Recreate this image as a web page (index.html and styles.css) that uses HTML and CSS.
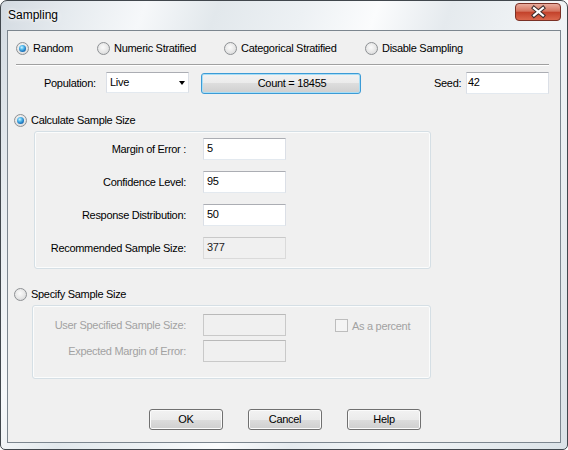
FILE: index.html
```html
<!DOCTYPE html>
<html>
<head>
<meta charset="utf-8">
<title>Sampling</title>
<link rel="stylesheet" href="styles.css">
</head>
<body>
<div class="window">
  <div class="titlebar">
    <span class="title">Sampling</span>
    <div class="close" aria-label="Close">
      <svg width="46" height="18" viewBox="0 0 46 18">
        <defs>
          <linearGradient id="cg" x1="0" y1="0" x2="0" y2="1">
            <stop offset="0" stop-color="#eab0a2"/>
            <stop offset="0.45" stop-color="#d5745f"/>
            <stop offset="0.52" stop-color="#c3422b"/>
            <stop offset="1" stop-color="#dc6a4f"/>
          </linearGradient>
        </defs>
        <rect x="0.5" y="0.5" width="45" height="17" rx="3.5" fill="url(#cg)" stroke="#7a3126"/>
        <path d="M19 5 L28 12.5 M28 5 L19 12.5" stroke="#3b2b2b" stroke-width="4.2" stroke-linecap="square"/>
        <path d="M19 5 L28 12.5 M28 5 L19 12.5" stroke="#ffffff" stroke-width="2.2" stroke-linecap="square"/>
      </svg>
    </div>
  </div>
  <div class="client">
    <div class="modes">
      <span class="radio checked"><span class="dot"></span>Random</span>
      <span class="radio"><span class="dot"></span>Numeric Stratified</span>
      <span class="radio"><span class="dot"></span>Categorical Stratified</span>
      <span class="radio"><span class="dot"></span>Disable Sampling</span>
    </div>
    <div class="sep"></div>
    <div class="poprow">
      <span class="poplabel">Population:</span>
      <div class="combo"><span>Live</span><span class="arrow"></span></div>
      <div class="btn default count">Count = 18455</div>
      <span class="seedlabel">Seed:</span>
      <div class="field seed">42</div>
    </div>

    <div class="radio checked section calc-radio"><span class="dot"></span>Calculate Sample Size</div>
    <div class="group calc">
      <span class="lbl">Margin of Error :</span><div class="field">5</div>
      <span class="lbl">Confidence Level:</span><div class="field">95</div>
      <span class="lbl">Response Distribution:</span><div class="field">50</div>
      <span class="lbl">Recommended Sample Size:</span><div class="field readonly">377</div>
    </div>

    <div class="radio section spec-radio"><span class="dot"></span>Specify Sample Size</div>
    <div class="group spec">
      <span class="lbl disabled">User Specified Sample Size:</span><div class="field off"></div>
      <span class="check disabled"><span class="box"></span>As a percent</span>
      <span class="lbl disabled">Expected Margin of Error:</span><div class="field off"></div>
    </div>

    <div class="actions">
      <div class="btn">OK</div>
      <div class="btn">Cancel</div>
      <div class="btn">Help</div>
    </div>
  </div>
</div>
</body>
</html>
```

FILE: styles.css
```css
* { box-sizing: border-box; }

html, body {
  margin: 0;
  padding: 0;
}

body {
  width: 568px;
  height: 450px;
  overflow: hidden;
  background: #ffffff;
  font-family: "Liberation Sans", Arial, sans-serif;
  font-size: 11px;
  letter-spacing: -0.3px;
  color: #000;
}

.window {
  width: 568px;
  height: 450px;
  border: 1px solid #41474d;
  border-radius: 7px 7px 5px 5px;
  padding: 0 6px 6px 6px;
  display: flex;
  flex-direction: column;
  background: linear-gradient(110deg, #d3dae1 0%, #e6ebef 10%, #f6f8fa 20%, #e2e8ec 30%, #edf1f4 42%, #fbfcfd 52%, #e5eaee 62%, #f2f5f7 76%, #dbe2e7 100%);
}

.titlebar {
  height: 29px;
  flex: none;
  display: flex;
  justify-content: space-between;
  align-items: flex-start;
}

.title {
  font-size: 12px;
  letter-spacing: 0;
  line-height: 14px;
  padding-top: 7px;
  margin-left: 1px;
  color: #000;
  text-shadow: 0 0 6px #ffffff, 0 0 3px #ffffff;
}

.close {
  width: 46px;
  height: 18px;
  margin-top: 2px;
  display: flex;
}

.client {
  flex: 1;
  border: 1px solid #7c868f;
  background: #f0f0f0;
  padding: 0 11px 0 8px;
  display: flex;
  flex-direction: column;
  align-items: flex-start;
}

/* radios */
.modes {
  display: grid;
  grid-template-columns: 81px 127px 141px auto;
  height: 17px;
  margin-top: 9px;
  align-items: center;
  width: 100%;
}

.radio {
  display: flex;
  align-items: center;
  gap: 4px;
  white-space: nowrap;
  line-height: 13px;
}

.dot {
  flex: none;
  width: 13px;
  height: 13px;
  border-radius: 50%;
  border: 1px solid #8e9194;
  background: radial-gradient(circle at 45% 40%, #fbfbfb 0%, #e6e6e6 55%, #cdd0d2 100%);
  position: relative;
}

.checked .dot::after {
  content: "";
  position: absolute;
  left: 2px;
  top: 2px;
  width: 7px;
  height: 7px;
  border-radius: 50%;
  background: radial-gradient(circle at 40% 35%, #d4f3ff 0%, #5cc0ef 30%, #1f78c0 65%, #0d4a86 100%);
}

.sep {
  width: 100%;
  margin-top: 7px;
  border-top: 1px solid #a0a0a0;
  border-bottom: 1px solid #ffffff;
}

/* population row */
.poprow {
  display: flex;
  align-items: flex-start;
  height: 22px;
  margin-top: 6px;
}

.poplabel {
  width: 62px;
  margin-left: 28px;
  line-height: 22px;
}

.combo {
  width: 83px;
  height: 21px;
  background: #fff;
  border: 1px solid #dbdfe6;
  border-top-color: #abadb3;
  border-bottom-color: #e3e9ef;
  display: flex;
  align-items: center;
  justify-content: space-between;
  padding: 0 3px 2px 3px;
}

.arrow {
  width: 0;
  height: 0;
  border-left: 3.5px solid transparent;
  border-right: 3.5px solid transparent;
  border-top: 4px solid #000;
  margin-top: 2px;
}

.btn {
  width: 74px;
  height: 21px;
  border: 1px solid #707070;
  border-radius: 3px;
  background: linear-gradient(#f2f2f2 0%, #ebebeb 50%, #dddddd 50%, #cfcfcf 100%);
  box-shadow: inset 0 0 0 1px #fbfbfb;
  display: flex;
  align-items: center;
  justify-content: center;
  padding-bottom: 1px;
}

.btn.default {
  border-color: #3c9bd6;
  box-shadow: inset 0 0 0 1px #a8def6;
}

.count {
  width: 160px;
  margin-left: 12px;
  margin-top: 1px;
  padding-left: 22px;
}

.seedlabel {
  width: 32px;
  margin-left: 73px;
  line-height: 22px;
}

.field {
  width: 83px;
  height: 22px;
  background: #fff;
  border: 1px solid #dbdfe6;
  border-top-color: #abadb3;
  border-bottom-color: #e3e9ef;
  display: flex;
  align-items: center;
  padding: 0 3px 2px 3px;
}

.seed {
  padding: 0 2px 3px 1px;
}

.field.readonly {
  background: #f0f0f0;
  border-color: #dadada;
  border-top-color: #c9c9c9;
  color: #222;
}

.field.off {
  background: #f0f0f0;
  border-color: #c9c9c9;
  border-top-color: #b9b9b9;
}

/* sections */
.section {
  height: 17px;
}

.calc-radio {
  margin-top: 18px;
  margin-left: -2px;
}

.spec-radio {
  margin-top: 17px;
  margin-left: -2px;
}

.group {
  border: 1px solid #d5dfe5;
  border-radius: 3px;
  box-shadow: inset 0 0 0 1px #fbfcfc;
  display: grid;
  align-items: center;
  grid-auto-rows: 22px;
}

.calc {
  margin-top: 2px;
  margin-left: 18px;
  width: 397px;
  padding: 6px 0 9px 0;
  grid-template-columns: 151px 83px;
  column-gap: 17px;
  row-gap: 11px;
}

.spec {
  margin-top: 2px;
  margin-left: 16px;
  width: 399px;
  padding: 8px 0 16px 0;
  grid-template-columns: 153px 83px auto;
  column-gap: 17px;
  row-gap: 4px;
}

.lbl {
  text-align: right;
  white-space: nowrap;
  padding-bottom: 1px;
}

.disabled {
  color: #a2a2a2;
}

.check {
  display: flex;
  align-items: center;
  gap: 4px;
  margin-left: 32px;
  white-space: nowrap;
  padding-top: 1px;
}

.box {
  width: 13px;
  height: 13px;
  border: 1px solid #bdbdbd;
  background: #f4f4f4;
}

.actions {
  display: flex;
  gap: 25px;
  margin-top: 30px;
  margin-left: 133px;
}
```
